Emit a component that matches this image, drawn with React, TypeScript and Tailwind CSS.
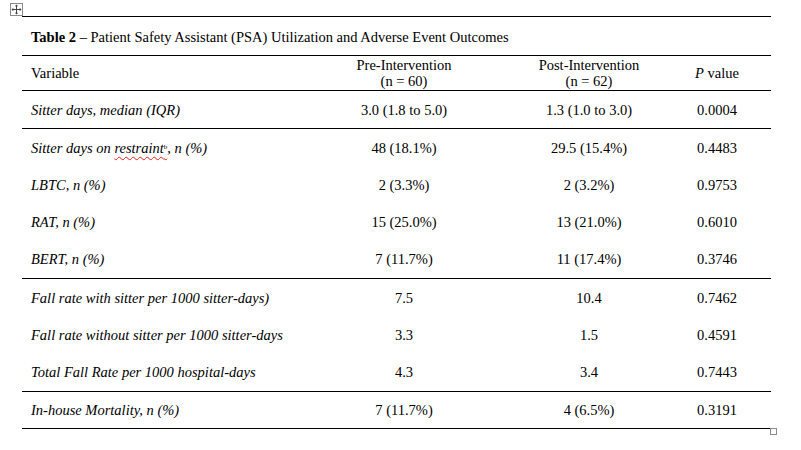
import React from "react";

type Row = { label: React.ReactNode; pre: string; post: string; p: string; h: string; top?: boolean; bottom?: boolean };

const serif = { fontFamily: '"Liberation Serif", "Times New Roman", serif' };

const rows: Row[] = [
  { label: "Sitter days, median (IQR)", pre: "3.0 (1.8 to 5.0)", post: "1.3 (1.0 to 3.0)", p: "0.0004", h: "h-[38px]" },
  {
    label: (
      <>
        Sitter days on{" "}
        <span className="underline decoration-wavy decoration-[#e0201a] decoration-1 underline-offset-[3px]">
          restraint<sup className="text-[7px] not-italic">b</sup>
        </span>
        , n (%)
      </>
    ),
    pre: "48 (18.1%)",
    post: "29.5 (15.4%)",
    p: "0.4483",
    h: "h-[38px]",
    top: true,
  },
  { label: "LBTC, n (%)", pre: "2 (3.3%)", post: "2 (3.2%)", p: "0.9753", h: "h-[37px]" },
  { label: "RAT, n (%)", pre: "15 (25.0%)", post: "13 (21.0%)", p: "0.6010", h: "h-[37px]" },
  { label: "BERT, n (%)", pre: "7 (11.7%)", post: "11 (17.4%)", p: "0.3746", h: "h-[38px]" },
  { label: "Fall rate with sitter per 1000 sitter-days)", pre: "7.5", post: "10.4", p: "0.7462", h: "h-[38px]", top: true },
  { label: "Fall rate without sitter per 1000 sitter-days", pre: "3.3", post: "1.5", p: "0.4591", h: "h-[37px]" },
  { label: "Total Fall Rate per 1000 hospital-days", pre: "4.3", post: "3.4", p: "0.7443", h: "h-[38px]" },
  { label: "In-house Mortality, n (%)", pre: "7 (11.7%)", post: "4 (6.5%)", p: "0.3191", h: "h-[38px]", top: true, bottom: true },
];

const cols = "grid grid-cols-[271px_222px_148px_108px] items-center";

function MoveHandle() {
  return (
    <div className="absolute left-[10px] top-[3px] w-[13px] h-[13px] border border-[#8a8a8a] bg-white flex items-center justify-center">
      <svg width="11" height="11" viewBox="0 0 11 11" fill="#444">
        <rect x="5" y="1.5" width="1" height="8" />
        <rect x="1.5" y="5" width="8" height="1" />
        <path d="M5.5 0.5 L3.8 2.3 H7.2 Z" />
        <path d="M5.5 10.5 L3.8 8.7 H7.2 Z" />
        <path d="M0.5 5.5 L2.3 3.8 V7.2 Z" />
        <path d="M10.5 5.5 L8.7 3.8 V7.2 Z" />
      </svg>
    </div>
  );
}

export default function App() {
  return (
    <div className="relative w-[801px] h-[450px] bg-white text-black overflow-hidden" style={serif}>
      <MoveHandle />
      <div className="absolute left-[770px] top-[428px] w-[7px] h-[7px] border border-[#8a8a8a] bg-white" />
      <div className="pt-[16px] pl-[22px] text-[14.5px] leading-[16px]">
        <div className="w-[749px]">
          {/* title */}
          <div className="h-[39px] border-t border-black flex items-center pl-[9px] pt-[1px]">
            <span>
              <b>Table 2</b> – Patient Safety Assistant (PSA) Utilization and Adverse Event Outcomes
            </span>
          </div>
          {/* header */}
          <div className={`${cols} h-[35px] border-t border-black`}>
            <div className="pl-[9px]">Variable</div>
            <div className="text-center">
              Pre-Intervention
              <br />
              (n = 60)
            </div>
            <div className="text-center">
              Post-Intervention
              <br />
              (n = 62)
            </div>
            <div className="text-center">
              <i>P</i> value
            </div>
          </div>
          {rows.map((r, i) => (
            <div
              key={i}
              className={`${cols} ${r.h} ${i === 0 || r.top ? "border-t border-black" : ""} ${r.bottom ? "border-b border-black" : ""}`}
            >
              <div className="pl-[9px] italic">{r.label}</div>
              <div className="text-center">{r.pre}</div>
              <div className="text-center">{r.post}</div>
              <div className="text-center">{r.p}</div>
            </div>
          ))}
        </div>
      </div>
    </div>
  );
}
